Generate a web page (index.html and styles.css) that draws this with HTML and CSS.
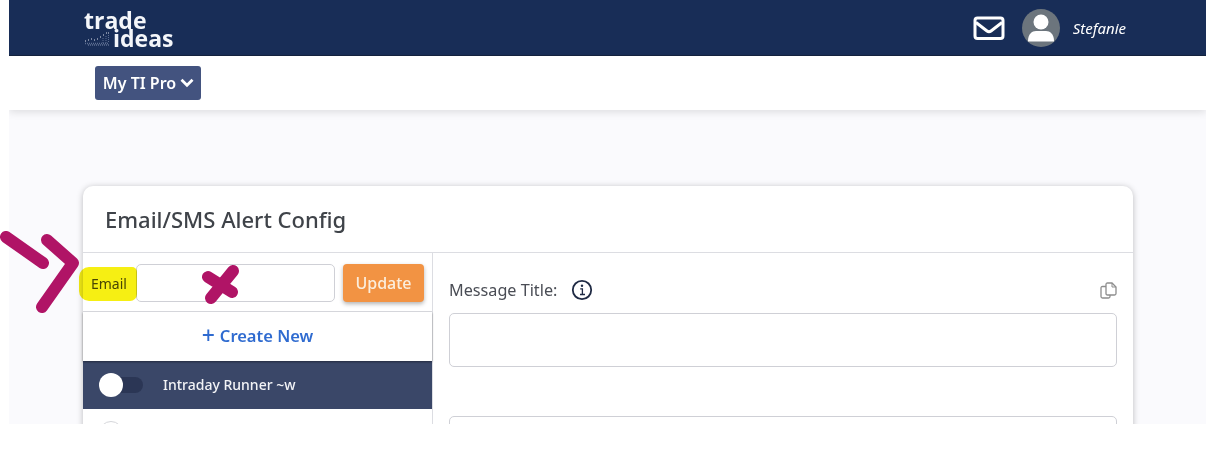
FILE: index.html
```html
<!DOCTYPE html>
<html lang="en">
<head>
<meta charset="utf-8">
<title>Email/SMS Alert Config</title>
<link rel="stylesheet" href="styles.css">
</head>
<body>
<div class="frame">
  <header class="topbar">
    <div class="logo">
      <span class="logo-trade">trade</span>
      <div class="logo-row">
        <svg class="logo-chart" width="29" height="16" viewBox="0 0 29 16">
          <path d="M1 11h1M4 10h1M7 9h1M10 10h1M13 9h1M16 7h1M19 5h1M22 3h1M24 3h1" stroke="#dfe4ee" stroke-width="1.2" fill="none"/>
          <path d="M1 13.500h24M4 15h21" stroke="#5d6f92" stroke-width="1.500" stroke-dasharray="1 1" fill="none"/>
          <path d="M19 8v5M22 6v7M24.500 5v8" stroke="#5d6f92" stroke-width="1" stroke-dasharray="1 1" fill="none"/>
        </svg>
        <span class="logo-ideas">ideas</span>
      </div>
    </div>
    <div class="user">
      <svg class="mail" width="32" height="25" viewBox="0 0 32 25">
        <rect x="2" y="2" width="28" height="20.500" rx="2.500" fill="none" stroke="#fff" stroke-width="3"/>
        <path d="M3 6.500l11 8.500q2 1.500 4 0l11-8.500" fill="none" stroke="#fff" stroke-width="3"/>
      </svg>
      <svg class="avatar" width="38" height="38" viewBox="0 0 38 38">
        <circle cx="19" cy="19" r="19" fill="#6c757d"/>
        <circle cx="19" cy="13" r="7.500" fill="#fff"/>
        <path d="M6 32c0-7 4-10 8-10h10c4 0 8 3 8 10v0.500H6z" fill="#fff"/>
      </svg>
      <span class="username">Stefanie</span>
    </div>
  </header>
  <nav class="subnav">
    <button class="menu-btn">My TI Pro
      <svg width="14" height="10" viewBox="0 0 14 10"><path d="M1.500 1.800l5.500 5.500 5.500-5.500" fill="none" stroke="#fff" stroke-width="2.800"/></svg>
    </button>
  </nav>
  <main class="content">
    <section class="card">
      <h1 class="card-title">Email/SMS Alert Config</h1>
      <div class="card-body">
        <aside class="sidebar">
          <div class="email-row">
            <label class="email-label">Email</label>
            <div class="input email-input"></div>
            <button class="update-btn">Update</button>
          </div>
          <div class="create-row"><span class="plus">+</span> Create New</div>
          <div class="alert-row active">
            <span class="toggle"><span class="knob"></span></span>
            <span class="alert-name">Intraday Runner ~w</span>
          </div>
          <div class="alert-row">
            <span class="toggle off"><span class="knob"></span></span>
          </div>
        </aside>
        <div class="editor">
          <div class="field-head">
            <span class="field-label">Message Title:</span>
            <svg class="info" width="22" height="22" viewBox="0 0 22 22">
              <circle cx="11" cy="11" r="9.200" fill="none" stroke="#1f2a44" stroke-width="1.800"/>
              <circle cx="11" cy="6.800" r="1.200" fill="#1f2a44"/>
              <path d="M9.200 9.800H11.400V15.500M9 15.500h5" fill="none" stroke="#1f2a44" stroke-width="1.300"/>
            </svg>
            <svg class="copy" width="17" height="17" viewBox="0 0 17 17">
              <path d="M6 2.500q0-1.500 1.500-1.500h4.500l4 4v6.500q0 1.500-1.500 1.500h-7q-1.500 0-1.500-1.500z" fill="none" stroke="#8d8d8d" stroke-width="1.300"/>
              <path d="M12 1v4h4" fill="none" stroke="#8d8d8d" stroke-width="1"/>
              <path d="M6 4.500H2.500q-1.500 0-1.500 1.500v8.500q0 1.500 1.500 1.500h6q1.500 0 1.500-1.500V13" fill="none" stroke="#8d8d8d" stroke-width="1.300"/>
            </svg>
          </div>
          <div class="input title-input"></div>
          <div class="input body-input"></div>
        </div>
      </div>
    </section>
  </main>
</div>
<svg class="markup" width="240" height="90" viewBox="0 0 240 90">
  <path d="M6 6L43 32" fill="none" stroke="#b01466" stroke-width="12" stroke-linecap="round"/>
  <path d="M47 9L73 32L42 76" fill="none" stroke="#b01466" stroke-width="12" stroke-linecap="round" stroke-linejoin="round"/>
  <path d="M208 46L232 61M233 40L211 67" fill="none" stroke="#b01466" stroke-width="12" stroke-linecap="round"/>
</svg>
<div class="highlight"></div>
</body>
</html>
```
FILE: styles.css
```css
* { box-sizing: border-box; }
html, body { margin: 0; padding: 0; }
body {
  position: relative;
  width: 1206px;
  height: 458px;
  overflow: hidden;
  background: #fff;
  font-family: "Noto Sans", "Open Sans", sans-serif;
  color: #3c4048;
}
.frame {
  margin-left: 9px;
  height: 424px;
  overflow: hidden;
  background: #fafafd;
}
.topbar {
  height: 56px;
  background: #182d57;
  display: flex;
  justify-content: space-between;
  align-items: center;
  padding: 0 80px 0 74px;
  border-bottom: 1px solid #14233f;
}
.logo {
  display: flex;
  flex-direction: column;
  color: #f4f6fa;
  font-family: "Open Sans", sans-serif;
  font-weight: 700;
  font-size: 23px;
  line-height: 18px;
  padding: 3px 0 0 1px;
}
.logo-trade { height: 18px; }
.logo-row { display: flex; align-items: flex-end; }
.logo-chart { margin-bottom: 1px; }
.user { display: flex; align-items: center; }
.mail { margin-right: 17px; margin-top: 2px; }
.avatar { margin-right: 13px; }
.username { color: #fff; font-style: italic; font-size: 15px; }
.subnav {
  height: 54px;
  background: #fff;
  box-shadow: 0 2px 8px rgba(0, 0, 0, 0.12);
  padding: 10px 0 0 86px;
  position: relative;
}
.menu-btn {
  height: 34px;
  width: 106px;
  padding: 0 0 0 1px;
  border: 0;
  border-radius: 3px;
  background: #43537f;
  color: #fff;
  font: 600 16px "Noto Sans", sans-serif;
  display: flex;
  align-items: center;
  justify-content: center;
  gap: 4px;
}
.content { padding: 76px 73px 0 74px; }
.card {
  background: #fff;
  border-radius: 10px 10px 0 0;
  box-shadow: 0 1px 6px rgba(0, 0, 0, 0.25);
  height: 400px;
}
.card-title {
  margin: 0;
  height: 67px;
  padding: 17px 22px 0;
  font-size: 22px;
  line-height: 32px;
  font-weight: 500;
  color: #3f4349;
  border-bottom: 1px solid #dcdde2;
}
.card-body { display: flex; }
.sidebar {
  width: 350px;
  flex: none;
  border-right: 1px solid #dcdde2;
  height: 300px;
}
.email-row {
  height: 59px;
  display: flex;
  align-items: flex-start;
  padding: 11px 8px 0 8px;
  border-bottom: 1px solid #dcdde2;
}
.email-label {
  width: 45px;
  font-size: 14px;
  line-height: 40px;
  color: #4a4a20;
}
.input {
  border: 1px solid #cfd0d6;
  border-radius: 5px;
  background: #fff;
}
.email-input { width: 199px; height: 38px; }
.update-btn {
  margin-left: 8px;
  width: 81px;
  height: 38px;
  padding: 0;
  border: 0;
  border-radius: 4px;
  background: #f29343;
  color: #fbeedd;
  font: 500 16px "Noto Sans", sans-serif;
  box-shadow: 0 2px 4px rgba(0, 0, 0, 0.3);
}
.create-row {
  height: 49px;
  padding-bottom: 2px;
  display: flex;
  align-items: center;
  justify-content: center;
  gap: 5px;
  color: #2f6bd0;
  font-size: 16.500px;
  font-weight: 600;
  box-shadow: 0 1px 2px rgba(0, 0, 0, 0.4);
  position: relative;
}
.plus { font-size: 23px; line-height: 1; font-weight: 500; }
.alert-row {
  height: 48px;
  display: flex;
  align-items: center;
  padding-left: 16px;
  background: #fff;
}
.alert-row.active { background: #3a4768; }
.toggle {
  width: 44px;
  height: 16px;
  border-radius: 8px;
  background: #2b3655;
  display: flex;
  align-items: center;
}
.toggle.off { background: #fff; }
.knob {
  width: 24px;
  height: 24px;
  border-radius: 50%;
  background: #fff;
  flex: none;
}
.toggle.off .knob { border: 1px solid #d5d6da; }
.alert-name {
  margin-left: 20px;
  margin-bottom: 2px;
  color: #f2f3f6;
  font-size: 14px;
  font-weight: 500;
}
.editor { flex: 1; padding: 23px 16px 0; }
.field-head { display: flex; align-items: center; height: 28px; }
.field-label { font-size: 16.200px; color: #4a4d55; margin-right: 14px; }
.copy { margin-left: auto; }
.title-input { margin-top: 9px; height: 54px; }
.body-input { margin-top: 49px; height: 54px; }
.markup { position: absolute; left: 0; top: 231px; }
.highlight {
  position: absolute;
  left: 79px;
  top: 267px;
  width: 58px;
  height: 34px;
  border-radius: 10px 5px 7px 10px;
  background: #f6ef13;
  mix-blend-mode: multiply;
}
```
